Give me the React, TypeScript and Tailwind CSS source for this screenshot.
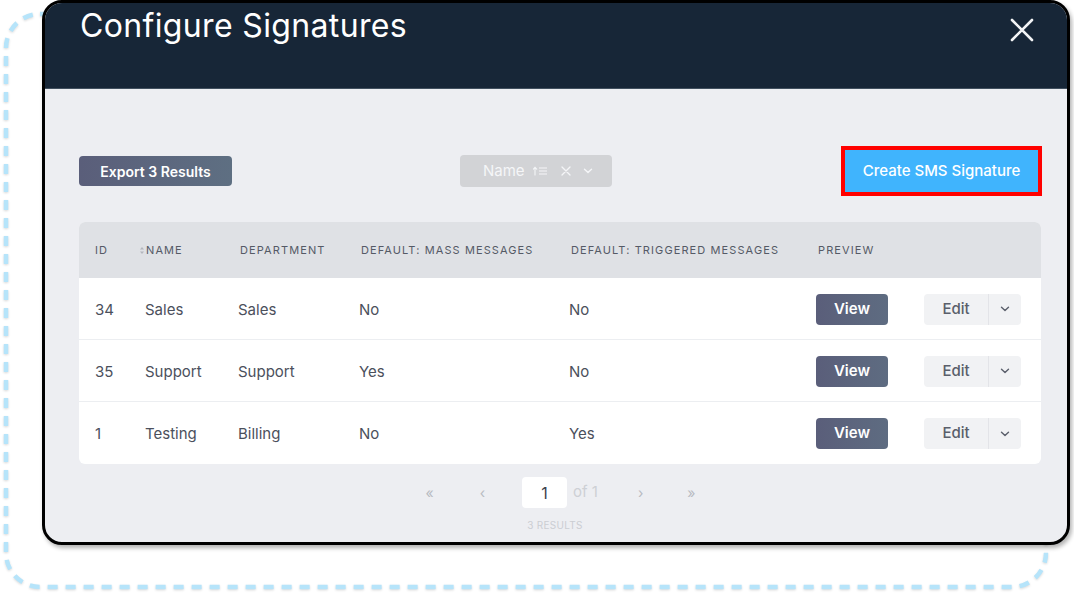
import React from 'react';

const rows = [
  { id: '34', name: 'Sales', dept: 'Sales', mass: 'No', triggered: 'No' },
  { id: '35', name: 'Support', dept: 'Support', mass: 'Yes', triggered: 'No' },
  { id: '1', name: 'Testing', dept: 'Billing', mass: 'No', triggered: 'Yes' },
];

const cols = 'grid grid-cols-[50px_93px_121px_210px_247px_108px_1fr] pl-[16px]';

function Chevron({ className = '' }: { className?: string }) {
  return (
    <svg className={className} width="10" height="6" viewBox="0 0 10 6" fill="none">
      <path d="M1.5 1.2 5 4.6 8.5 1.2" stroke="currentColor" strokeWidth="1.4" strokeLinecap="round" strokeLinejoin="round" />
    </svg>
  );
}

export default function App() {
  return (
    <div className="relative w-[1074px] h-[597px] bg-white overflow-hidden font-['Inter',sans-serif]">
      {/* dashed highlight frame behind the modal */}
      <svg className="absolute left-0 top-0" width="1074" height="597" style={{ filter: 'drop-shadow(0px 1px 1px rgba(0,0,0,0.15))' }}>
        <rect x="6" y="14" width="1040" height="573" rx="34" fill="none" stroke="#b6e4fa" strokeWidth="4.5" strokeDasharray="10 8" />
      </svg>

      <div className="relative ml-[42px] w-[1028px] h-[545px] border-[3px] border-black rounded-[20px] overflow-hidden bg-[#edeef2] shadow-[2px_3px_4px_rgba(0,0,0,0.3)] flex flex-col">
        {/* Header */}
        <div className="h-[86px] bg-[#172637] border-b border-[#41505f] flex justify-between shrink-0">
          <h1 className="pl-[35px] pt-[3px] text-[32px] leading-[40px] text-white font-normal tracking-[0.35px]">
            Configure Signatures
          </h1>
          <svg className="mt-[15px] mr-[33px]" width="24" height="24" viewBox="0 0 24 24" fill="none">
            <path d="M2 2 22 22M22 2 2 22" stroke="#f2f3f5" strokeWidth="2.6" strokeLinecap="round" />
          </svg>
        </div>

        {/* Body */}
        <div className="pl-[34px] pr-[25px] flex flex-col">
          {/* Toolbar */}
          <div className="mt-[57px] h-[50px] flex items-center">
            <button className="w-[153px] h-[30px] rounded-[4px] bg-gradient-to-r from-[#5a5e7a] to-[#5e6f82] text-white text-[14px] font-semibold">
              Export 3 Results
            </button>
            <div className="ml-[228px] w-[152px] h-[32px] rounded-[4px] bg-[#d2d3d6] flex items-center pl-[23px] text-[#f5f6f8]">
              <span className="text-[15px]">Name</span>
              <svg className="ml-[8px]" width="15" height="10" viewBox="0 0 15 10" fill="none">
                <path d="M2 9V1.5M0.3 3.2 2 1.3 3.7 3.2" stroke="currentColor" strokeWidth="1.1" strokeLinecap="round" />
                <path d="M6 2h8M6 5h8M6 8h8" stroke="currentColor" strokeWidth="1.1" />
              </svg>
              <svg className="ml-[13px]" width="10" height="10" viewBox="0 0 10 10" fill="none">
                <path d="M1 1 9 9M9 1 1 9" stroke="currentColor" strokeWidth="1.3" strokeLinecap="round" />
              </svg>
              <Chevron className="ml-[12px]" />
            </div>
            <div className="ml-auto border-[4px] border-[#ff0000]">
              <button className="w-[193px] h-[42px] bg-[#40b4fd] text-white text-[15px] font-medium">
                Create SMS Signature
              </button>
            </div>
          </div>

          {/* Table */}
          <div className="mt-[26px] mr-[1px] rounded-[6px] overflow-hidden bg-white">
            <div className={`${cols} h-[56px] items-center bg-[#dfe1e5] text-[11px] tracking-[1.1px] text-[#555a66] uppercase`}>
              <div>ID</div>
              <div className="-ml-[5px] flex items-center">
                <svg className="mr-[2px]" width="4" height="7" viewBox="0 0 4 7" fill="#b3b6bd">
                  <path d="M2 0 4 2.6H0Z" />
                  <path d="M2 7 4 4.4H0Z" />
                </svg>
                Name
              </div>
              <div className="pl-[2px]">Department</div>
              <div className="pl-[2px]">Default: Mass Messages</div>
              <div className="pl-[2px]">Default: Triggered Messages</div>
              <div className="pl-[2px]">Preview</div>
              <div />
            </div>
            <div className="divide-y divide-[#eceef1]">
              {rows.map((r) => (
                <div key={r.id} className={`${cols} h-[62px] items-center text-[15px] text-[#4b505c]`}>
                  <div className="pt-[3px]">{r.id}</div>
                  <div className="pt-[3px]">{r.name}</div>
                  <div className="pt-[3px]">{r.dept}</div>
                  <div className="pt-[3px]">{r.mass}</div>
                  <div className="pt-[3px]">{r.triggered}</div>
                  <div className="pt-[1px]">
                    <button className="w-[72px] h-[31px] rounded-[4px] bg-gradient-to-r from-[#5a5e7a] to-[#5e6c81] text-white text-[15px] font-semibold">
                      View
                    </button>
                  </div>
                  <div className="flex pt-[1px]">
                    <button className="w-[65px] h-[31px] rounded-l-[4px] bg-[#f1f2f4] text-[15px] font-medium text-[#5a5f6b] border-r border-[#e3e4e8]">
                      Edit
                    </button>
                    <button className="w-[32px] h-[31px] rounded-r-[4px] bg-[#f1f2f4] text-[#5a5f6b] flex items-center justify-center">
                      <Chevron />
                    </button>
                  </div>
                </div>
              ))}
            </div>
          </div>

          {/* Pagination */}
          <div className="mt-[13px] flex items-center justify-center text-[#b7bac1] text-[14px]">
            <span>«</span>
            <span className="ml-[46px]">‹</span>
            <div className="ml-[37px] w-[45px] h-[31px] rounded-[4px] bg-white flex items-center justify-center text-[16px] text-[#3d414b]">
              1
            </div>
            <span className="ml-[6px] text-[15px] text-[#cdd0d5]">of 1</span>
            <span className="ml-[40px]">›</span>
            <span className="ml-[44px]">»</span>
          </div>
          <div className="mt-[10px] flex justify-center pr-[11px] text-[10px] text-[#cbcdd2] tracking-[0.3px]">
            3 RESULTS
          </div>
        </div>
      </div>
    </div>
  );
}
